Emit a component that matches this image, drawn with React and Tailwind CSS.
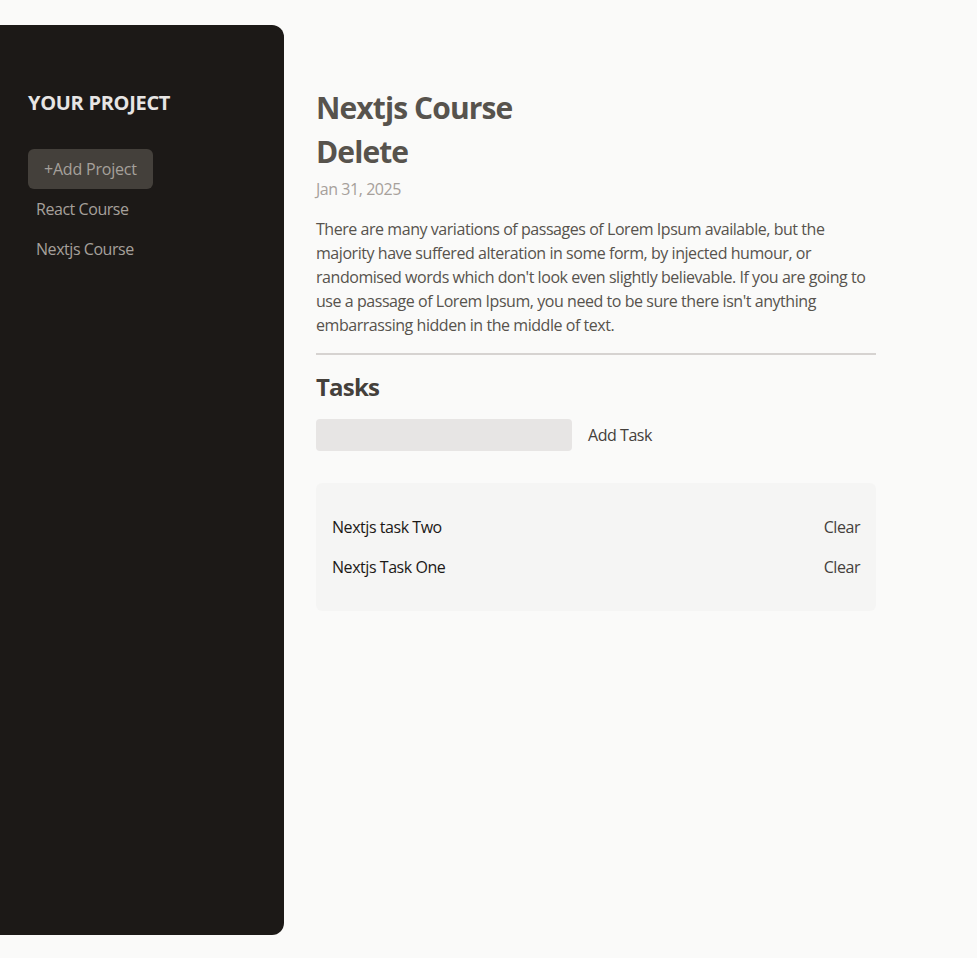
export default function App() {
  const font = { fontFamily: '"Open Sans", "Noto Sans", sans-serif' };
  return (
    <div className="min-h-screen bg-stone-50 tracking-[-0.45px]" style={font}>
      <main className="flex gap-8 pt-[25px]">
        <aside className="w-[284px] h-[910px] px-7 py-16 bg-stone-900 text-stone-50 rounded-r-xl">
          <h2 className="mb-8 font-bold uppercase text-xl text-stone-200 tracking-[-0.3px]">Your Project</h2>
          <div>
            <button className="px-4 py-2 text-base rounded-md bg-stone-700 text-stone-400 tracking-[-0.2px]">+Add Project</button>
          </div>
          <ul>
            <li>
              <button className="w-full text-left px-2 py-1 rounded-sm my-1 text-stone-400">React Course</button>
            </li>
            <li>
              <button className="w-full text-left px-2 py-1 rounded-sm my-1 text-stone-400">Nextjs Course</button>
            </li>
          </ul>
        </aside>
        <div className="w-[560px] mt-[65px]">
          <header className="pb-4 mb-4 border-b-2 border-stone-300">
            <h1 className="text-3xl font-bold text-stone-600 mb-2 tracking-[-0.9px]">Nextjs Course</h1>
            <button className="block text-3xl font-bold text-stone-600 mb-[7px] tracking-[-0.9px]">Delete</button>
            <p className="mb-4 text-stone-400">Jan 31, 2025</p>
            <p className="text-stone-600 whitespace-pre-wrap">
              There are many variations of passages of Lorem Ipsum available, but the majority have suffered alteration in some form, by injected humour, or randomised words which don't look even slightly believable. If you are going to use a passage of Lorem Ipsum, you need to be sure there isn't anything embarrassing hidden in the middle of text.
            </p>
          </header>
          <section>
            <h2 className="text-2xl font-bold text-stone-700 mb-4 tracking-[-0.8px]">Tasks</h2>
            <div className="flex items-center gap-4">
              <input type="text" className="w-64 px-2 py-1 rounded-sm bg-stone-200 outline-none" />
              <button className="text-stone-700">Add Task</button>
            </div>
            <ul className="p-4 mt-8 rounded-md bg-stone-100">
              <li className="flex justify-between my-4">
                <span className="text-stone-900">Nextjs task Two</span>
                <button className="text-stone-700">Clear</button>
              </li>
              <li className="flex justify-between my-4">
                <span className="text-stone-900">Nextjs Task One</span>
                <button className="text-stone-700">Clear</button>
              </li>
            </ul>
          </section>
        </div>
      </main>
    </div>
  );
}
